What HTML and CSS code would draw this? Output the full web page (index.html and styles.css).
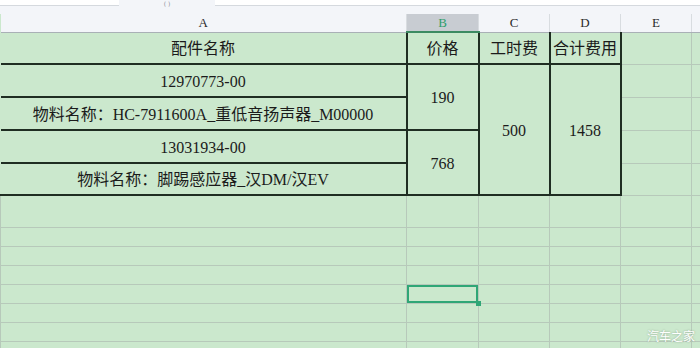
FILE: index.html
```html
<!DOCTYPE HTML>
<html>
<head>
  <meta charset="utf-8">
  <link rel="stylesheet" href="styles.css">
  <title>配件费用</title>
</head>
<body>
<div class="bar">
  <div class="field left"></div>
  <div class="tab">( )</div>
  <div class="field right"></div>
</div>
<table class="sheet">
  <colgroup>
    <col class="ca"><col class="cb"><col class="cc"><col class="cd"><col class="ce"><col class="cf">
  </colgroup>
  <tr class="letters">
    <th>A</th><th class="sel">B</th><th>C</th><th>D</th><th>E</th><th></th>
  </tr>
  <tr class="r-head">
    <td class="box first">配件名称</td>
    <td class="box">价格</td>
    <td class="box">工时费</td>
    <td class="box">合计费用</td>
    <td></td><td></td>
  </tr>
  <tr class="r-item">
    <td class="box first">12970773-00</td>
    <td class="box" rowspan="2">190</td>
    <td class="box" rowspan="4">500</td>
    <td class="box" rowspan="4">1458</td>
    <td></td><td></td>
  </tr>
  <tr class="r-item">
    <td class="box first">物料名称：HC-7911600A_重低音扬声器_M00000</td>
    <td></td><td></td>
  </tr>
  <tr class="r-item">
    <td class="box first">13031934-00</td>
    <td class="box" rowspan="2">768</td>
    <td></td><td></td>
  </tr>
  <tr class="r-last">
    <td class="box first">物料名称：脚踢感应器_汉DM/汉EV</td>
    <td></td><td></td>
  </tr>
  <tr class="r-tall"><td></td><td></td><td></td><td></td><td></td><td></td></tr>
  <tr class="r-row"><td></td><td></td><td></td><td></td><td></td><td></td></tr>
  <tr class="r-row"><td></td><td></td><td></td><td></td><td></td><td></td></tr>
  <tr class="r-row"><td></td><td></td><td></td><td></td><td></td><td></td></tr>
  <tr class="r-row"><td></td><td class="cur"></td><td></td><td></td><td></td><td></td></tr>
  <tr class="r-row"><td></td><td></td><td></td><td></td><td></td><td></td></tr>
  <tr class="r-row"><td></td><td></td><td></td><td></td><td></td><td></td></tr>
  <tr class="r-row"><td></td><td></td><td></td><td></td><td></td><td></td></tr>
</table>
<div class="mark">汽车之家</div>
</body>
</html>
```

FILE: styles.css
```css
html, body {
  margin: 0;
  padding: 0;
}

body {
  width: 700px;
  height: 348px;
  overflow: hidden;
  position: relative;
  background: #cbe8cd;
  font-family: "Liberation Serif", "Noto Sans CJK SC", serif;
}

/* strip above the column letters */
.bar {
  display: flex;
  height: 14px;
  background: #f3f5f9;
}

.bar .field {
  height: 5px;
  background: #fff;
  border-bottom: 1px solid #d5d9de;
}

.bar .left {
  width: 119px;
}

.bar .right {
  flex: 1;
}

.bar .tab {
  width: 96px;
  height: 7px;
  text-align: center;
  font-family: "DejaVu Sans", sans-serif;
  font-size: 6px;
  line-height: 7px;
  color: #8a8f96;
}

/* the sheet */
table.sheet {
  border-collapse: collapse;
  table-layout: fixed;
  width: 706px;
}

col.ca { width: 406px; }
col.cb { width: 72px; }
col.cc { width: 71px; }
col.cd { width: 71px; }
col.ce { width: 71px; }
col.cf { width: 15px; }

.sheet th {
  height: 17px;
  padding: 0;
  background: #f3f5f9;
  border-right: 1px solid #d8dce0;
  border-bottom: 1px solid #a9b0b6;
  font-size: 13px;
  font-weight: normal;
  line-height: 17px;
  color: #2a2a2a;
}

.sheet th.sel {
  background: #c8ccd2;
  color: #2e9e6c;
  border-bottom: 2px solid #3c8a62;
}

.sheet td {
  padding: 2px 0 0;
  border: 1px solid #b7c9ba;
  text-align: center;
  white-space: nowrap;
  font-size: 16px;
  line-height: 20px;
  color: #1b1b1b;
}

.sheet td.box {
  border: 2px solid #1f2d22;
}

.sheet td.first {
  border-left: none;
}

.sheet .r-head td.box {
  border-top: none;
}

.r-head { height: 32px; }
.r-item { height: 33px; }
.r-last { height: 32px; }
.r-tall { height: 32px; }
.r-row { height: 19px; }

/* active cell */
.sheet td.cur {
  position: relative;
  box-shadow: inset 0 0 0 2px #2fa676;
}

.sheet td.cur::after {
  content: "";
  position: absolute;
  right: -3px;
  bottom: -3px;
  width: 5px;
  height: 5px;
  background: #2fa676;
}

.mark {
  position: absolute;
  right: 5px;
  bottom: 4px;
  font-family: "Noto Sans CJK SC", sans-serif;
  font-size: 12px;
  color: #fff;
  text-shadow: 0 0 2px rgba(60, 80, 60, 0.45);
}
```
